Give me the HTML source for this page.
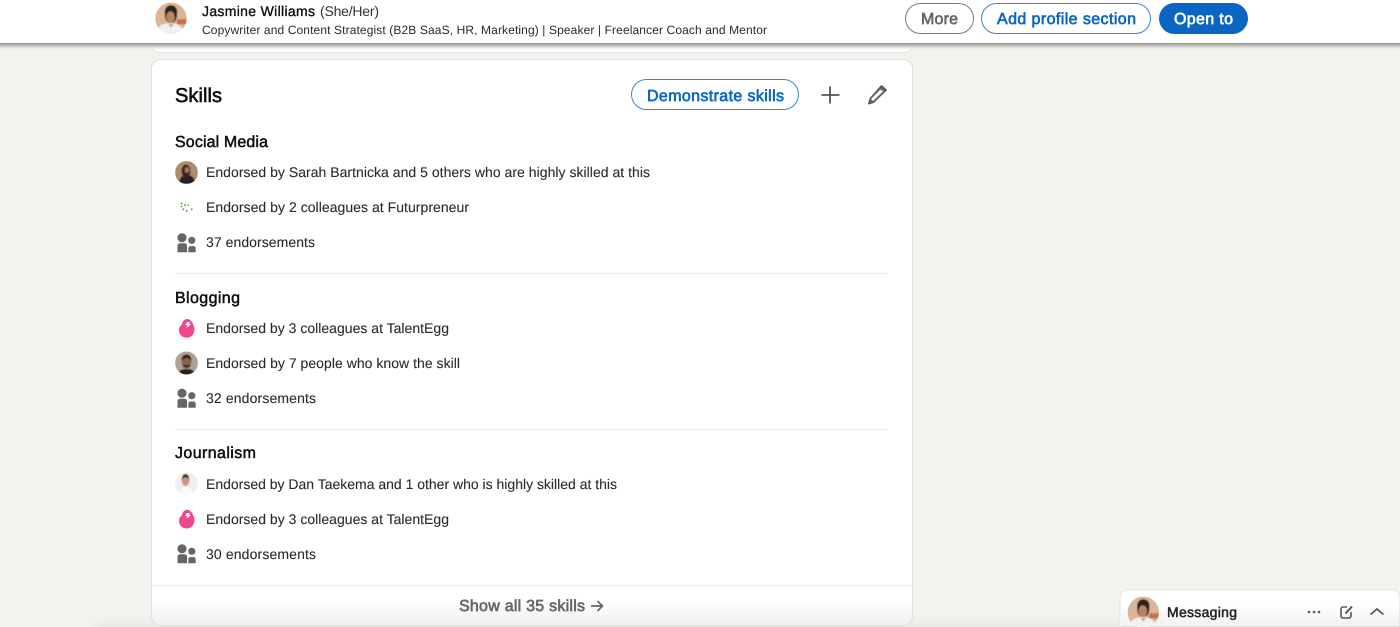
<!DOCTYPE html>
<html lang="en">
<head>
<meta charset="utf-8">
<title>Skills</title>
<style>
html,body{margin:0;padding:0;width:1400px;height:627px;overflow:hidden;background:#f3f2ef}
svg{display:block;position:absolute;left:0;top:0}
text{font-family:"Liberation Sans",sans-serif;text-rendering:geometricPrecision}
.r{font-size:14px;fill:#2b2b2b;stroke:#2b2b2b;stroke-width:.1px}
.h{font-size:16px;fill:#111;stroke:#111;stroke-width:.5px}
.b{font-size:16px;stroke-width:.65px}
</style>
</head>
<body>
<svg width="1400" height="627" viewBox="0 0 1400 627" xmlns="http://www.w3.org/2000/svg">
<defs>
<linearGradient id="shadow" x1="0" y1="0" x2="0" y2="1"><stop offset="0" stop-color="#7f7f7d"/><stop offset=".3" stop-color="#a9a9a6"/><stop offset=".65" stop-color="#dddcd9"/><stop offset="1" stop-color="#f3f2ef" stop-opacity="0"/></linearGradient>
<linearGradient id="fade" x1="0" y1="0" x2="0" y2="1"><stop offset="0" stop-color="#000" stop-opacity="0"/><stop offset="1" stop-color="#000" stop-opacity=".06"/></linearGradient>
<filter id="s" x="-20%" y="-20%" width="140%" height="140%"><feGaussianBlur stdDeviation=".5"/></filter>
<filter id="t" x="-5%" y="-50%" width="110%" height="200%"><feGaussianBlur stdDeviation=".25"/></filter>
<filter id="w" x="-30%" y="-200%" width="160%" height="500%"><feGaussianBlur stdDeviation="8"/></filter>
<clipPath id="c1"><circle cx="171" cy="18.300" r="15.700"/></clipPath>
<clipPath id="c2"><circle cx="1143.300" cy="612.300" r="15.700"/></clipPath>
<clipPath id="c3"><circle cx="186.500" cy="172.500" r="11.500"/></clipPath>
<clipPath id="c4"><circle cx="186.500" cy="363" r="11.500"/></clipPath>
<clipPath id="c5"><circle cx="186.500" cy="483.700" r="11.500"/></clipPath>
<g id="ppl" fill="#666">
<circle cx="6" cy="4.500" r="4.600"/><circle cx="15.800" cy="7" r="3.600"/>
<path d="M1.500 12.500a2.500 2.500 0 0 1 2.500-2.500h4.500a2.500 2.500 0 0 1 2.500 2.500V19H1.500z"/>
<path d="M12.300 15a2.200 2.200 0 0 1 2.200-2.200h3a2.200 2.200 0 0 1 2.200 2.200v4h-7.400z"/>
</g>
<g id="egg">
<path d="M0.500 -9.500C4 -9.500 7.700 -4 7.700 1C7.700 6 4.500 9.200 0 9.200C-4.500 9.200 -7.700 6 -7.700 1.500C-7.700 -1 -6.500 -3 -5 -3.500C-4.500 -6.500 -2.500 -9.500 0.500 -9.500Z" fill="#f2468f"/>
<path d="M0 -6.200L3.600 -6.200L2 -4.500L4.500 -4L-0.500 -0.500L0.800 -3L-1.500 -3.400Z" fill="#fff"/>
</g>
<g id="face">
<rect x="-16" y="-16" width="32" height="32" fill="#dcb497"/>
<rect x="6" y="1" width="10" height="5" fill="#c4714e"/>
<path d="M-15 16c1-8 6-11 14-11s13 3 15 11z" fill="#f0f1f3"/>
<path d="M-6 -3c-1-7 2-10 6-10s7 3 6 9c0 4-1 6-3 8h-6c-2-2-3-3-3-7z" fill="#2a211d"/>
<ellipse cx="-0.500" cy="-1" rx="4.300" ry="6" fill="#b98365"/>
<path d="M-3 6l3 3 3-3z" fill="#c6977a"/>
</g>
</defs>

<rect width="1400" height="627" fill="#f3f2ef"/>

<!-- lower page shading -->
<rect x="95" y="624" width="1030" height="22" fill="#000" opacity=".05" filter="url(#w)"/>

<!-- upper card remainder -->
<rect x="151.500" y="20.500" width="761" height="32" rx="8" fill="#fff" stroke="#e4e3e0"/>

<!-- bar shadow -->
<rect x="0" y="42" width="1400" height="8" fill="url(#shadow)"/>
<rect x="0" y="0" width="1400" height="43" fill="#fff"/>

<!-- top avatar -->
<g clip-path="url(#c1)"><g filter="url(#s)"><use href="#face" x="171" y="18.300"/></g></g>

<!-- top bar text -->
<g filter="url(#t)">
<text x="202" y="16" font-size="14" fill="#111" stroke="#111" stroke-width=".35" textLength="113" lengthAdjust="spacing">Jasmine Williams</text>
<text x="320" y="16" font-size="14" fill="#333" textLength="59" lengthAdjust="spacing">(She/Her)</text>
<text x="202" y="34" font-size="12" fill="#2a2a2a" textLength="565" lengthAdjust="spacing">Copywriter and Content Strategist (B2B SaaS, HR, Marketing) | Speaker | Freelancer Coach and Mentor</text>
</g>

<!-- top bar buttons -->
<rect x="905.500" y="3.500" width="68" height="30" rx="15" fill="#fff" stroke="#7a7a7a"/>
<rect x="981.500" y="3.500" width="169" height="30" rx="15" fill="#fff" stroke="#0a66c2" stroke-opacity=".8"/>
<rect x="1159" y="3" width="89" height="31" rx="15.500" fill="#0a66c2"/>
<g filter="url(#t)">
<text class="b" x="921" y="24" fill="#666" stroke="#666" textLength="37" lengthAdjust="spacing">More</text>
<text class="b" x="997" y="24" fill="#0a66c2" stroke="#0a66c2" textLength="139" lengthAdjust="spacing">Add profile section</text>
<text class="b" x="1174" y="24" fill="#fff" stroke="#fff" textLength="59" lengthAdjust="spacing">Open to</text>
</g>

<!-- skills card -->
<rect x="151.500" y="59.500" width="761" height="566" rx="9" fill="#fff" stroke="#e2e1de"/>
<path d="M152 598H912V617a8 8 0 0 1-8 8H160a8 8 0 0 1-8-8Z" fill="url(#fade)"/>
<rect x="152" y="585" width="760" height="1" fill="#eeedeb"/>
<rect x="175" y="273" width="713" height="1" fill="#ebebe9"/>
<rect x="175" y="429" width="713" height="1" fill="#ebebe9"/>

<g filter="url(#t)">
<text x="175" y="102" font-size="20" fill="#111" stroke="#111" stroke-width=".6" textLength="47" lengthAdjust="spacing">Skills</text>

<text class="b" x="647" y="101" fill="#0a66c2" stroke="#0a66c2" textLength="137" lengthAdjust="spacing">Demonstrate skills</text>

<text class="h" x="175" y="147" textLength="93" lengthAdjust="spacing">Social Media</text>
<text class="r" x="206" y="177" textLength="444" lengthAdjust="spacing">Endorsed by Sarah Bartnicka and 5 others who are highly skilled at this</text>
<text class="r" x="206" y="212" textLength="263" lengthAdjust="spacing">Endorsed by 2 colleagues at Futurpreneur</text>
<text class="r" x="206" y="247" textLength="109" lengthAdjust="spacing">37 endorsements</text>

<text class="h" x="175" y="303" textLength="65" lengthAdjust="spacing">Blogging</text>
<text class="r" x="206" y="333" textLength="243" lengthAdjust="spacing">Endorsed by 3 colleagues at TalentEgg</text>
<text class="r" x="206" y="368" textLength="254" lengthAdjust="spacing">Endorsed by 7 people who know the skill</text>
<text class="r" x="206" y="403" textLength="110" lengthAdjust="spacing">32 endorsements</text>

<text class="h" x="175" y="458" textLength="81" lengthAdjust="spacing">Journalism</text>
<text class="r" x="206" y="489" textLength="411" lengthAdjust="spacing">Endorsed by Dan Taekema and 1 other who is highly skilled at this</text>
<text class="r" x="206" y="524" textLength="243" lengthAdjust="spacing">Endorsed by 3 colleagues at TalentEgg</text>
<text class="r" x="206" y="559" textLength="110" lengthAdjust="spacing">30 endorsements</text>

<text class="b" x="459" y="611" fill="#666" stroke="#666" textLength="126" lengthAdjust="spacing">Show all 35 skills</text>
</g>
<path d="M591 606H602M597.500 601L602.500 606L597.500 611" fill="none" stroke="#666" stroke-width="1.700"/>

<!-- demonstrate button + icons -->
<rect x="631.500" y="79.500" width="167" height="30" rx="15" fill="none" stroke="#0a66c2" stroke-opacity=".8"/>
<path d="M830 86.500V103.500M821.500 95H839.500" stroke="#555" stroke-width="1.800" fill="none"/>
<path d="M881.500 85.500L886.500 90L873.500 102.500L868.500 104L870 98.500Z" fill="#666" stroke="#555" stroke-width="1" stroke-linejoin="round"/>
<path d="M880.500 89.500L883 91.500L873 101L871 99Z" fill="#fff"/>

<!-- row icons -->
<g clip-path="url(#c3)"><g filter="url(#s)">
<rect x="175" y="161" width="23" height="23" fill="#ae8c6e"/>
<path d="M179 184c0-6 3-9 8-9s8 3 8 9z" fill="#2b2024"/>
<ellipse cx="186" cy="171" rx="4.500" ry="6.500" fill="#3a2620"/>
<ellipse cx="187" cy="170" rx="2.500" ry="3" fill="#a87258"/>
</g></g>

<g fill="#63ad42">
<circle cx="181.700" cy="203.500" r="1"/><circle cx="185" cy="205" r="1"/><circle cx="188.300" cy="205" r=".9"/><circle cx="183.300" cy="209.300" r="1"/><circle cx="186.700" cy="211" r="1"/><circle cx="191.700" cy="209.300" r="1" fill="#8a9a80"/><circle cx="181.500" cy="206.500" r=".9"/>
</g>

<use href="#ppl" x="176" y="233.300"/>
<use href="#ppl" x="176" y="388.700"/>
<use href="#ppl" x="176" y="544.300"/>

<use href="#egg" x="186.700" y="328.500"/>
<use href="#egg" x="186.700" y="519.300"/>

<g clip-path="url(#c4)"><g filter="url(#s)">
<rect x="175" y="351" width="23" height="24" fill="#aea292"/>
<path d="M178 375c1-5 4-6 8.500-6s8 1 9 6z" fill="#23201e"/>
<ellipse cx="186.500" cy="362" rx="4.800" ry="6.500" fill="#8b5f48"/>
<path d="M181.500 361c0-5 2.500-6.500 5-6.500s5 1.500 5 6.500c-1-2-3-3-5-3s-4 1-5 3z" fill="#2c211c"/>
<path d="M182 364c1 5 8 5 9 0l-1 1h-7z" fill="#3a2a22"/>
</g></g>

<g clip-path="url(#c5)"><g filter="url(#s)">
<rect x="175" y="472" width="23" height="24" fill="#f1efee"/>
<path d="M179 496c1-6 3-9 7-9s6.500 3 7.500 9z" fill="#fbfbfb"/>
<ellipse cx="185.500" cy="480.500" rx="3.800" ry="5.500" fill="#c59a80"/>
<path d="M181.800 480c0-4 1.500-6 3.700-6s3.800 2 3.800 6c-1-2-2-2.500-3.800-2.500s-2.700.5-3.700 2.500z" fill="#4a3426"/>
</g></g>

<!-- messaging -->
<path d="M1120 627V598a8 8 0 0 1 8-8H1391a8 8 0 0 1 9 8V627Z" fill="#fff" stroke="#e4e3e0"/>
<rect x="1121" y="605" width="279" height="22" fill="url(#fade)"/>
<g clip-path="url(#c2)"><g filter="url(#s)"><use href="#face" x="1143.300" y="612.300"/></g></g>
<text x="1167" y="617" font-size="14" fill="#222" stroke="#222" stroke-width=".5" textLength="70" lengthAdjust="spacing" filter="url(#t)">Messaging</text>
<g fill="#555"><circle cx="1309" cy="612" r="1.300"/><circle cx="1314" cy="612" r="1.300"/><circle cx="1319" cy="612" r="1.300"/></g>
<path d="M1347 607H1343a2 2 0 0 0-2 2V616a2 2 0 0 0 2 2H1349a2 2 0 0 0 2-2V612" fill="none" stroke="#555" stroke-width="1.600"/>
<path d="M1345.500 613.500L1352 606.500" fill="none" stroke="#555" stroke-width="2"/>
<path d="M1370.500 614.500L1377 609L1383.500 614.500" fill="none" stroke="#555" stroke-width="1.700"/>
</svg>
</body>
</html>
